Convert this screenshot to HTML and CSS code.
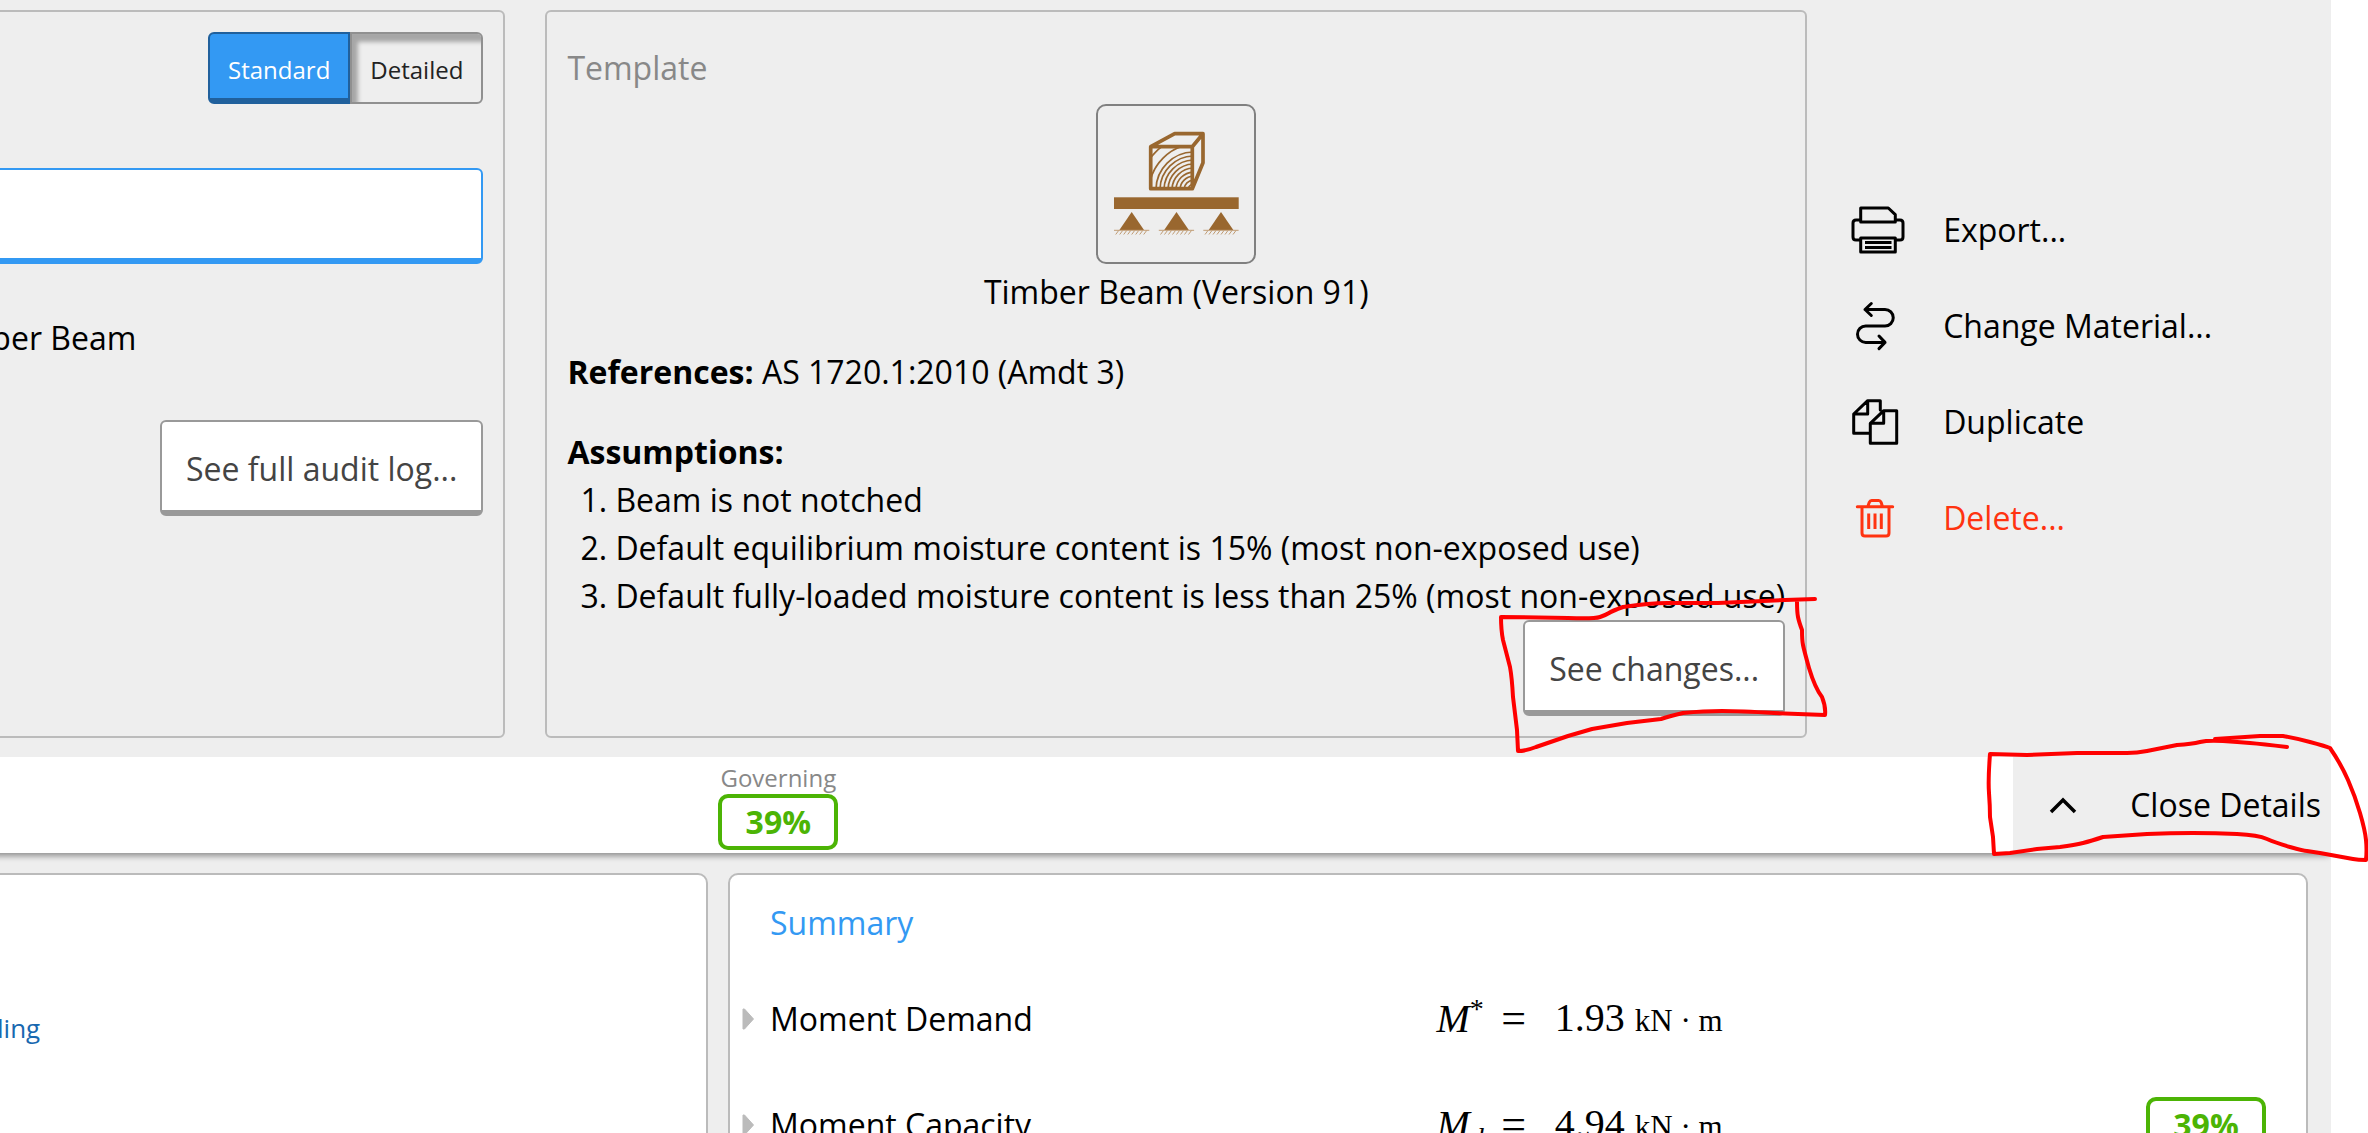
FILE: index.html
```html
<!DOCTYPE html>
<html lang="en">

<head>
    <meta charset="utf-8">
    <title>Timber Beam</title>
    <link rel="stylesheet" href="styles.css">
</head>

<body>
    <div class="page">
        <div class="details">
            <section class="panel">
                <div class="panel-head right">
                    <div class="toggle">
                        <button type="button" class="on">Standard</button>
                        <button type="button">Detailed</button>
                    </div>
                </div>
                <input type="text" class="name-input" aria-label="Name">
                <p class="type">Timber Beam</p>
                <div class="right">
                    <button type="button" class="btn">See full audit log...</button>
                </div>
            </section>

            <section class="panel">
                <h2 class="panel-head">Template</h2>
                <div class="thumb">
                    <svg viewBox="2 2 156 156" width="156" height="156">
                        <defs>
                            <clipPath id="face">
                                <rect x="55" y="43" width="42" height="42" />
                            </clipPath>
                            <g id="support">
                                <path d="M0 108L12.3 126h-24.6z" />
                                <path class="ground" d="M-17.7 126.3h35.3M-13 126.5l-3 4M-9 126.5l-3 4M-5 126.5l-3 4M-1 126.5l-3 4M3 126.5l-3 4M7 126.5l-3 4M11 126.5l-3 4M15 126.5l-3 4" />
                            </g>
                        </defs>
                        <g class="grain" clip-path="url(#face)">
                            <circle cx="98" cy="86" r="6" />
                            <circle cx="98" cy="86" r="10" />
                            <circle cx="98" cy="86" r="14" />
                            <circle cx="98" cy="86" r="18" />
                            <circle cx="98" cy="86" r="22" />
                            <circle cx="98" cy="86" r="26" />
                            <circle cx="98" cy="86" r="30" />
                            <circle cx="98" cy="86" r="34" />
                            <circle cx="98" cy="86" r="38" />
                            <circle cx="101" cy="88" r="48" />
                            <circle cx="98" cy="86" r="54" />
                        </g>
                        <path class="edge" d="M54.7 42.7h41.6v42H54.7zL78.7 29.7H107V58.7L96.3 84.7M96.3 42.7L107 29.7" />
                        <g class="wood">
                            <rect x="18" y="93.3" width="124.7" height="11.7" />
                            <use href="#support" x="35.7" />
                            <use href="#support" x="80.5" />
                            <use href="#support" x="125" />
                        </g>
                    </svg>
                </div>
                <p class="caption">Timber Beam (Version 91)</p>
                <p class="refs"><b>References:</b> AS 1720.1:2010 (Amdt 3)</p>
                <p><b>Assumptions:</b></p>
                <ol>
                    <li>Beam is not notched</li>
                    <li>Default equilibrium moisture content is 15% (most non-exposed use)</li>
                    <li>Default fully-loaded moisture content is less than 25% (most non-exposed use)</li>
                </ol>
                <div class="right">
                    <button type="button" class="btn">See changes...</button>
                </div>
            </section>

            <div class="actions">
                <button type="button" class="action">
                    <svg class="icon" viewBox="0 0 56 56">
                        <path d="M13.7 18H9q-3 0-3 3v14q0 3 3 3h4.7M48.3 18H53q3 0 3 3v14q0 3-3 3h-4.7M13.7 6h27.6l7 6.7V20H13.7zM13.7 36h34.6v14H13.7z" />
                        <path class="bar" d="M18 40.5h26.5M18 45.5h26.5" />
                    </svg>
                    Export...
                </button>
                <button type="button" class="action">
                    <svg class="icon" viewBox="0 0 56 56">
                        <path d="M24.3 5.5L18 11.5l6.3 6M18 11.5h20a8.2 8.2 0 0 1 0 16.5H18.7a8.2 8.2 0 0 0 0 16.4H38M32 38l6 6.4-6 6.2" />
                    </svg>
                    Change Material...
                </button>
                <button type="button" class="action">
                    <svg class="icon" viewBox="0 0 56 56">
                        <path d="M33.3 16V6.7H20.7L6.7 20v19.3h16M20.7 6.7V20h-14M36.7 16.7h13v32.6H23.3v-20zV29.3H23.3" />
                    </svg>
                    Duplicate
                </button>
                <button type="button" class="action delete">
                    <svg class="icon" viewBox="0 0 56 56">
                        <path d="M10.3 16.7h35.4M20.7 16.7l1.6-4.5q.7-1.7 2.4-1.7h7q1.7 0 2.4 1.7l1.4 4.5M15 16.7V43q0 3 3 3h21q3 0 3-3V16.7" />
                        <path class="bar" d="M21.7 23.5v15.5M28 23.5v15.5M34.3 23.5v15.5" />
                    </svg>
                    Delete...
                </button>
            </div>
        </div>

        <div class="bar-top">
            <div class="governing">
                <span class="label">Governing</span>
                <span class="badge">39%</span>
            </div>
            <button type="button" class="action close">
                <svg class="icon" viewBox="0 0 56 56">
                    <path class="chevron" d="M17 35l12-12 12 12" />
                </svg>
                Close Details
            </button>
        </div>

        <div class="cards">
            <section class="card">
                <a href="#" class="link">Loading</a>
            </section>
            <section class="card">
                <h2>Summary</h2>
                <table>
                    <tr>
                        <th scope="row">
                            <button type="button" class="expand">
                                <svg viewBox="0 0 12 22" width="12" height="22"><path d="M1 1h1.5L11.5 11 2.5 21H1z" /></svg>
                                Moment Demand
                            </button>
                        </th>
                        <td class="math sym"><i>M</i><sup>*</sup></td>
                        <td class="math eq">=</td>
                        <td class="math">1.93 <small>kN · m</small></td>
                        <td class="result"></td>
                    </tr>
                    <tr>
                        <th scope="row">
                            <button type="button" class="expand">
                                <svg viewBox="0 0 12 22" width="12" height="22"><path d="M1 1h1.5L11.5 11 2.5 21H1z" /></svg>
                                Moment Capacity
                            </button>
                        </th>
                        <td class="math sym"><i>M</i><sub><i>d</i></sub></td>
                        <td class="math eq">=</td>
                        <td class="math">4.94 <small>kN · m</small></td>
                        <td class="result"><span class="badge">39%</span></td>
                    </tr>
                </table>
            </section>
        </div>
    </div>

    <!-- hand drawn markup -->
    <svg class="markup" viewBox="0 0 2368 1133">
        <path d="M1501 617L1568 618Q1594 619 1600 617T1609 613T1623 607Q1650 603 1667 603L1718 603L1785 600L1815 599M1797 601Q1797 612 1798 617T1802 630Q1802 640 1803 645T1809 668Q1815 688 1822 697Q1826 707 1825 715L1774 713Q1740 711 1722 711T1683 713Q1670 716 1661 719L1627 723L1592 729L1568 736L1536 747Q1526 751 1518 751L1517 730L1513 697Q1512 678 1510 667L1503 640Q1501 630 1501 617" />
        <path d="M2287 747Q2262 744 2250 743T2223 741T2200 742T2177 745L2147 751Q2137 753 2127 753H2077L2027 755L1990 754Q1988 780 1989 793T1990 817L1993 837L1994 854L2010 853L2037 849L2060 847Q2075 845 2083 843T2103 837L2147 834Q2170 833 2193 833T2237 834T2267 839T2290 847T2307 851L2320 853L2353 859Q2358 860 2366 860Q2367 850 2366 840T2360 813T2348 780T2330 748Q2325 746 2310 742T2283 736H2260L2215 739" />
    </svg>
</body>

</html>
```
FILE: styles.css
```css
* {
    box-sizing: border-box;
}
html {
    overflow: hidden;
}
body {
    margin: 0;
    height: 100vh;
    overflow: hidden;
    background: #fff;
    color: #000;
    font-family: "Open Sans", "Noto Sans", sans-serif;
    font-size: 32px;
    line-height: 48px;
}
button, input {
    font: inherit;
    color: inherit;
}
h2, p, ol {
    margin: 0;
    font-size: 32px;
    font-weight: normal;
}

/* scrolled sideways, left part is out of view */
.page {
    margin-left: -102px;
    margin-right: 37px;
    height: 100vh;
    overflow: hidden;
    background: #eee;
}

/* details */
.details {
    display: grid;
    grid-template-columns: 11fr auto 9fr;
    gap: 40px;
    padding: 10px 0 19px 16px;
}
.panel {
    border: 2px solid #bbb;
    border-radius: 6px;
    padding: 20px;
}
.panel-head {
    height: 72px;
    line-height: 72px;
    color: #888;
}
.right {
    display: flex;
    justify-content: flex-end;
}
.toggle {
    display: flex;
    height: 72px;
    font-size: 24px;
}
.toggle button {
    padding: 0 18px;
    border: 2px solid #909090;
    border-radius: 0 6px 6px 0;
    background: #eee;
    color: #222;
    box-shadow: inset 6px 8px 4px rgba(0, 0, 0, .3);
}
.toggle .on {
    border: 2px solid #20609c;
    border-bottom-width: 6px;
    border-radius: 6px 0 0 6px;
    background: #3399f3;
    color: #fff;
    box-shadow: none;
}
.name-input {
    display: block;
    width: 100%;
    height: 96px;
    margin-top: 64px;
    border: 2px solid #3399f3;
    border-bottom-width: 6px;
    border-radius: 6px;
    background: #fff;
    outline: none;
}
.type {
    margin: 50px 0 58px;
}
.btn {
    height: 96px;
    padding: 6px 24px 0;
    border: 2px solid #999;
    border-bottom-width: 6px;
    border-radius: 6px;
    background: #fff;
    color: #444;
}
.thumb {
    width: 160px;
    height: 160px;
    margin: 0 auto 4px;
    border: 2px solid #808080;
    border-radius: 10px;
}
.thumb svg {
    display: block;
}
.grain {
    fill: none;
    stroke: #99672f;
    stroke-width: 1.7;
}
.edge {
    fill: none;
    stroke: #99672f;
    stroke-width: 3.7;
    stroke-linejoin: round;
}
.wood {
    fill: #99672f;
}
.ground {
    stroke: #c09c74;
    stroke-width: 1;
}
.caption {
    text-align: center;
}
.refs {
    margin: 32px 0;
}
ol {
    padding-left: 48px;
}

/* actions */
.actions {
    display: flex;
    flex-direction: column;
    justify-content: center;
}
.action {
    display: flex;
    align-items: center;
    gap: 40px;
    height: 96px;
    padding: 0;
    border: 0;
    background: none;
    white-space: nowrap;
}
.icon {
    width: 56px;
    height: 56px;
    overflow: visible;
    fill: none;
    stroke: currentColor;
    stroke-width: 3;
    stroke-linecap: round;
    stroke-linejoin: round;
}
.icon .bar {
    stroke-width: 3;
    stroke-linecap: butt;
}
.icon .chevron {
    stroke-width: 3.5;
    stroke-linecap: butt;
    stroke-linejoin: miter;
}
.delete {
    color: #ff3310;
}

/* bar */
.bar-top {
    display: flex;
    justify-content: space-between;
    height: 96px;
    background: #fff;
    box-shadow: 0 5px 6px -2px rgba(0, 0, 0, .4);
}
.governing {
    margin-left: calc((100% + 28px) / 3);
    padding-top: 5px;
    text-align: center;
}
.label {
    display: block;
    font-size: 24px;
    line-height: 32px;
    color: #888;
}
.badge {
    display: block;
    width: 120px;
    height: 56px;
    border: 4px solid #4cb405;
    border-radius: 10px;
    color: #4cb405;
    font-weight: bold;
    text-align: center;
}
.close {
    padding: 0 10px 0 21px;
    background: #eee;
}

/* cards */
.cards {
    display: grid;
    grid-template-columns: 1fr 2fr;
    gap: 20px;
    padding: 20px 23px 0 20px;
}
.card {
    border: 2px solid #bbb;
    border-radius: 10px;
    padding: 24px 40px 24px 12px;
    background: #fff;
}
.card h2 {
    margin-bottom: 19px;
    padding-left: 28px;
    color: #3399f3;
}
.link {
    display: block;
    margin-top: 105px;
    padding-left: 12px;
    font-size: 26px;
    font-weight: 500;
    color: #1868b0;
    text-decoration: none;
}
table {
    width: 100%;
    table-layout: fixed;
    border-collapse: collapse;
}
tr {
    height: 106px;
}
th, td {
    padding: 0;
    font-weight: normal;
    text-align: left;
}
th {
    width: 39%;
}
.expand {
    display: flex;
    align-items: center;
    gap: 16px;
    padding: 0;
    border: 0;
    background: none;
}
.expand svg {
    fill: #bbb;
    stroke: #bbb;
    stroke-linejoin: round;
}
.math {
    font-family: "Liberation Serif", serif;
    font-size: 40px;
    white-space: nowrap;
}
.math small {
    font-size: 31px;
}
.math sup, .math sub {
    font-size: 28px;
    line-height: 0;
}
.sym {
    width: 10%;
    padding-right: 5px;
    text-align: right;
}
.eq {
    width: 66px;
    padding-right: 16px;
    font-size: 44px;
    text-align: center;
}
.result {
    width: 30%;
}
.result .badge {
    margin-left: auto;
}

.markup {
    position: absolute;
    top: 0;
    left: 0;
    width: 100%;
    fill: none;
    stroke: #f00;
    stroke-width: 4;
    stroke-linejoin: round;
    stroke-linecap: round;
    pointer-events: none;
}
```
